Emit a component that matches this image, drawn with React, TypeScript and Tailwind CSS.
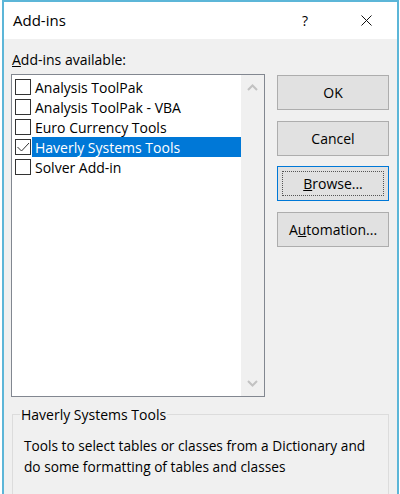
import React from 'react';

const addins = [
    {name: 'Analysis ToolPak', checked: false},
    {name: 'Analysis ToolPak - VBA', checked: false},
    {name: 'Euro Currency Tools', checked: false},
    {name: 'Haverly Systems Tools', checked: true},
    {name: 'Solver Add-in', checked: false},
];

const font = {fontFamily: '"Open Sans", "Noto Sans", sans-serif'};

const CheckBox = ({checked}: {checked: boolean}) => (
    <div className="w-[16px] h-[16px] border border-[#333] bg-white shrink-0 flex items-center justify-center">
        {checked && (
            <svg width="14" height="14" viewBox="0 0 14 14">
                <path d="M1.5 7 L5.5 11 L13 3" fill="none" stroke="#333" strokeWidth="1"/>
            </svg>
        )}
    </div>
);

const Button = ({children, focused}: {children: React.ReactNode; focused?: boolean}) => (
    <div
        className={
            focused
                ? "h-[35px] w-[112px] bg-[#e1e1e1] border border-[#0078d7] p-[4px]"
                : "h-[35px] w-[112px] bg-[#e1e1e1] border border-[#adadad] p-[4px]"
        }
    >
        <div
            className={
                focused
                    ? "h-full w-full border border-dotted border-[#555] flex items-center justify-center text-[14px] text-black"
                    : "h-full w-full flex items-center justify-center text-[14px] text-black"
            }
        >
            {children}
        </div>
    </div>
);

export default function App() {
    return (
        <div className="w-[400px] h-[494px] overflow-hidden bg-white pl-[2px] pr-[1px]" style={font}>
            <div className="h-[520px] border-l-2 border-r-2 border-t-2 border-[#5cb6d8] flex flex-col">
                {/* title bar */}
                <div className="h-[37px] bg-white flex items-center shrink-0">
                    <span className="ml-[9px] text-[15px] text-black">Add-ins</span>
                    <span className="ml-auto mr-[53px] text-[14px] text-black">?</span>
                    <svg className="mr-[25px]" width="11" height="11" viewBox="0 0 11 11">
                        <path d="M0.5 0.5 L10.5 10.5 M10.5 0.5 L0.5 10.5" stroke="#111" strokeWidth="1"/>
                    </svg>
                </div>

                <div className="flex-1 bg-[#f0f0f0]">
                    <div className="flex pl-[7px]">
                        <div className="w-[254px]">
                            <div className="h-[35px] flex items-end pb-[4px] pl-[1px] text-[14px] text-black">
                                <span><span className="underline">A</span>dd-ins available:</span>
                            </div>
                            <div className="h-[323px] border border-[#828790] bg-white flex">
                                <div className="flex-1 pt-[2px]">
                                    {addins.map((a) => (
                                        <div key={a.name} className="h-[20px] flex items-center pl-[3px]">
                                            <CheckBox checked={a.checked}/>
                                            <div
                                                className={
                                                    a.checked
                                                        ? "ml-[1px] h-full flex-1 flex items-center pl-[3px] bg-[#0078d7] text-white text-[14px]"
                                                        : "ml-[1px] h-full flex-1 flex items-center pl-[3px] text-black text-[14px]"
                                                }
                                            >
                                                {a.name}
                                            </div>
                                        </div>
                                    ))}
                                </div>
                                <div className="w-[23px] bg-[#f0f0f0] flex flex-col items-center justify-between py-[9px]">
                                    <svg width="11" height="7" viewBox="0 0 11 7">
                                        <path d="M1 6 L5.5 1.5 L10 6" fill="none" stroke="#c2c2c2" strokeWidth="2"/>
                                    </svg>
                                    <svg width="11" height="7" viewBox="0 0 11 7">
                                        <path d="M1 1 L5.5 5.5 L10 1" fill="none" stroke="#c2c2c2" strokeWidth="2"/>
                                    </svg>
                                </div>
                            </div>
                        </div>

                        <div className="ml-[12px] pt-[36px] flex flex-col gap-[10.5px]">
                            <Button>OK</Button>
                            <Button>Cancel</Button>
                            <Button focused><span><span className="underline">B</span>rowse...</span></Button>
                            <Button><span>A<span className="underline">u</span>tomation...</span></Button>
                        </div>
                    </div>

                    <fieldset className="ml-[8px] mt-[7px] w-[377px] h-[120px] border border-[#dcdcdc]">
                        <legend className="ml-[7px] px-[1px] text-[14px] text-black">Haverly Systems Tools</legend>
                        <p className="pl-[11px] pt-[10px] text-[13.7px] leading-[21px] text-black">
                            Tools to select tables or classes from a Dictionary and<br/>
                            do some formatting of tables and classes
                        </p>
                    </fieldset>
                </div>
            </div>
        </div>
    );
}
